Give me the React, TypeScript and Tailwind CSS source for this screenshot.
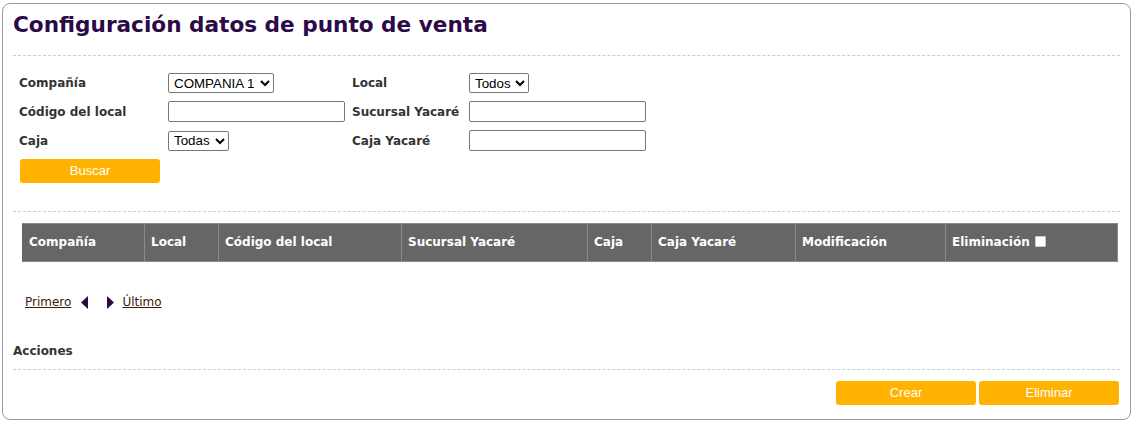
import React from "react";

const label = "font-['DejaVu_Sans',Verdana,sans-serif] font-bold text-[12px] leading-[16px] text-[#333]";
const ctl = "font-['Liberation_Sans',Arial,sans-serif] text-[13.33px] leading-[16px] text-black";

function Sel({ opts, w }: { opts: string[]; w: string }) {
  return (
    <select className={`${ctl} ${w} h-[20px] border border-[#767676] rounded-[2px] bg-white pl-[1px] pr-0 block`}>
      {opts.map((o) => (
        <option key={o}>{o}</option>
      ))}
    </select>
  );
}

function Inp() {
  return <input type="text" className={`${ctl} w-[177px] h-[21px] border border-[#767676] rounded-[2px] bg-white px-1 block`} />;
}

function Btn({ children, w = "w-[140px]" }: { children: React.ReactNode; w?: string }) {
  return (
    <button className={`${w} h-[24px] bg-[#ffb300] rounded-[3px] text-white font-['Liberation_Sans',Arial,sans-serif] text-[13px] leading-[16px] flex items-center justify-center`}>
      {children}
    </button>
  );
}

const cols: [string, number][] = [
  ["Compañía", 122],
  ["Local", 74],
  ["Código del local", 183],
  ["Sucursal Yacaré", 186],
  ["Caja", 64],
  ["Caja Yacaré", 144],
  ["Modificación", 150],
  ["Eliminación", 172],
];

export default function App() {
  return (
    <div className="w-[1133px] h-[422px] bg-white pt-[3px] pl-[2px]">
      <div className="w-[1129px] h-[417px] border border-[#999] rounded-[8px] px-[10px]">
        <h1 className="font-['DejaVu_Sans',Verdana,sans-serif] font-bold text-[21.6px] leading-[26px] text-[#2b0a47] pt-[8px] h-[51px]">
          Configuración datos de punto de venta
        </h1>
        <div className="border-t border-dashed border-[#ccc]" />
        <div className="pl-[6px] pt-[17px]">
          <div className="grid grid-cols-[149px_184px_117px_177px] gap-y-[8px] items-center">
            <div className={label}>Compañía</div>
            <div><Sel opts={["COMPANIA 1"]} w="w-[106px]" /></div>
            <div className={label}>Local</div>
            <div><Sel opts={["Todos"]} w="w-[60px]" /></div>

            <div className={label}>Código del local</div>
            <div><Inp /></div>
            <div className={label}>Sucursal Yacaré</div>
            <div><Inp /></div>

            <div className={label}>Caja</div>
            <div><Sel opts={["Todas"]} w="w-[61px]" /></div>
            <div className={label}>Caja Yacaré</div>
            <div><Inp /></div>
          </div>
          <div className="pt-[8px] pl-[1px]">
            <Btn>Buscar</Btn>
          </div>
        </div>
        <div className="border-t border-dashed border-[#ccc] mt-[28px]" />
        <div className="pl-[9px] pt-[11px]">
          <table className="border-collapse bg-[#666] w-[1096px]">
            <thead>
              <tr className="h-[38px]">
                {cols.map(([c, w], i) => (
                  <th
                    key={c}
                    style={{ width: w }}
                    className={`text-left align-middle px-[6px] pb-[2px] text-white font-['DejaVu_Sans',Verdana,sans-serif] font-bold text-[12px] leading-[16px] border border-[#8a8a8a] ${i === 0 ? "border-l-[#666]" : ""}`}
                  >
                    <span className="inline-flex items-center gap-[5px]">
                      {c}
                      {i === 7 && <span className="inline-block w-[11px] h-[11px] bg-white border border-[#ccc] rounded-[1px]" />}
                    </span>
                  </th>
                ))}
              </tr>
            </thead>
          </table>
        </div>
        <div className="pl-[12px] pt-[32px] flex items-center font-['DejaVu_Sans',Verdana,sans-serif] text-[12px] leading-[16px] text-[#3d1a0e]">
          <a className="underline">Primero</a>
          <svg width="7" height="13" viewBox="0 0 7 13" className="ml-[10px]"><path d="M7 0 V13 L0 6.5 Z" fill="#2b0a47" /></svg>
          <svg width="7" height="13" viewBox="0 0 7 13" className="ml-[19px]"><path d="M0 0 V13 L7 6.5 Z" fill="#2b0a47" /></svg>
          <a className="underline ml-[8px]">Último</a>
        </div>
        <div className={`${label} pt-[33px] pb-[10px]`}>Acciones</div>
        <div className="border-t border-dashed border-[#ccc]" />
        <div className="flex justify-end gap-[3px] pt-[11px] pr-[1px]">
          <Btn>Crear</Btn>
          <Btn>Eliminar</Btn>
        </div>
      </div>
    </div>
  );
}
